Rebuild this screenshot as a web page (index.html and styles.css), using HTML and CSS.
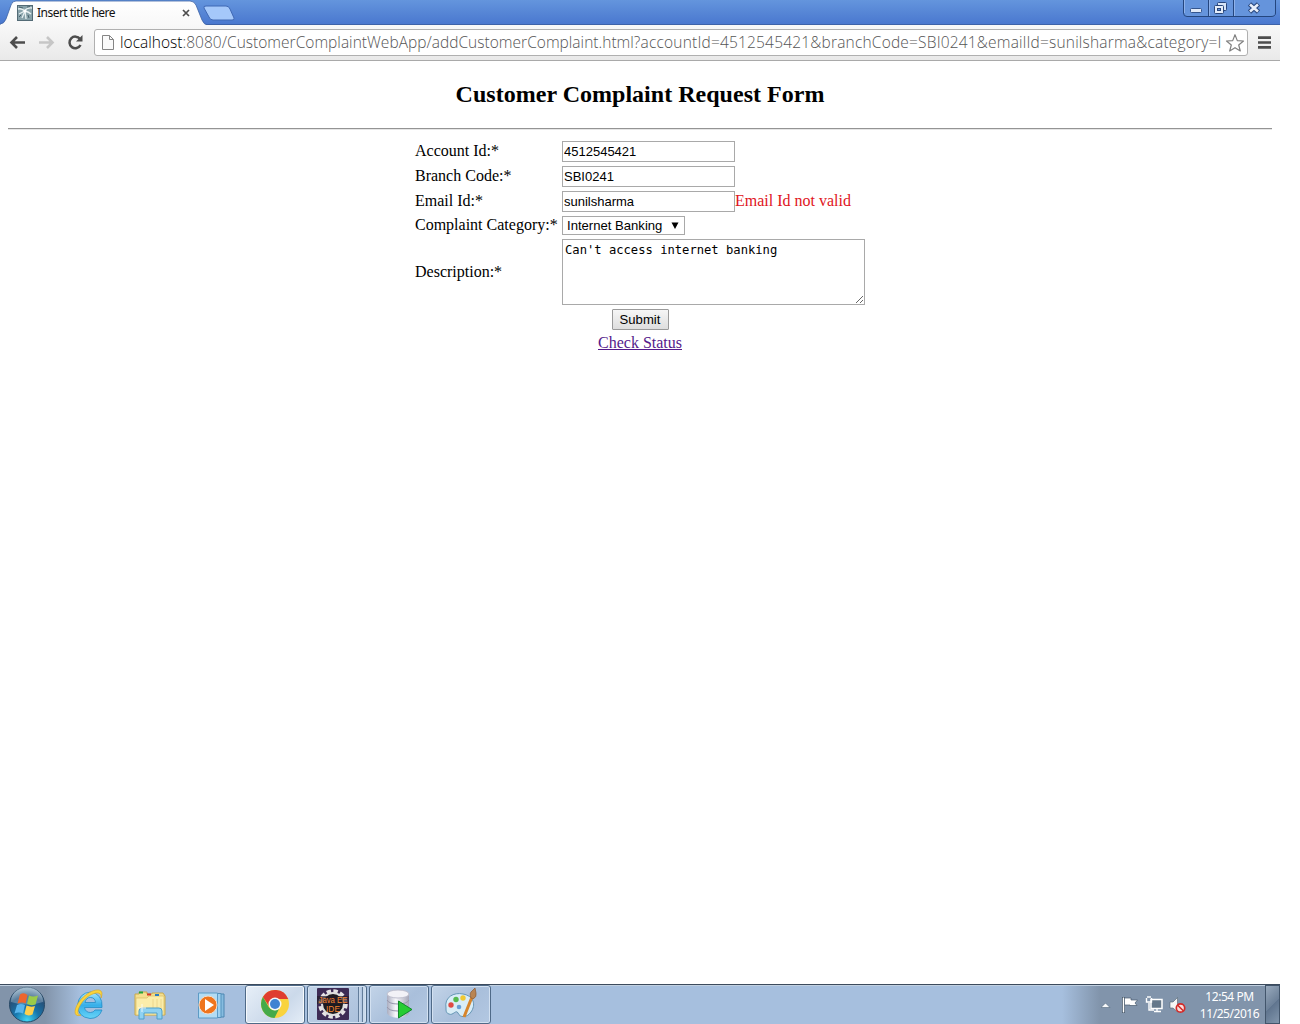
FILE: index.html
```html
<!DOCTYPE html>
<html lang="en">
<head>
<meta charset="utf-8">
<title>Insert title here</title>
<link rel="stylesheet" href="styles.css">
</head>
<body>
<div class="screen">
  <header class="tabstrip">
    <svg class="tabshape" width="240" height="26" viewBox="0 0 240 26">
      <defs><linearGradient id="tabg" x1="0" y1="0" x2="0" y2="1"><stop offset="0" stop-color="#fff"/><stop offset="1" stop-color="#f8f8f8"/></linearGradient></defs>
      <path d="M0 26V24Q4 24 6 19L11 5Q12 1 16 1H190Q194 1 196 5L202 20Q204 25 208 25V26Z" fill="url(#tabg)" stroke="#3c62a4" stroke-width=".8"/>
      <path d="M206 6H226Q229 6 230 9L234 18Q235 20 232 20H213Q210 20 209 17L204 8Q203 6 206 6Z" fill="#a5c8fa" stroke="#3f68b4"/>
    </svg>
    <div class="tab">
      <svg width="16" height="16" viewBox="0 0 16 16"><rect x=".5" y=".5" width="15" height="15" fill="#88a2aa" stroke="#536b76"/><path d="M1 4Q5 3 7.500 6Q10 2 15 3M7.500 6Q4 8 2 9M8 6Q12 7 14 9M8 6L5 13M8 6L9 14" stroke="#e7f0f1" stroke-width="1.300" fill="none"/><path d="M2 2L6 3M10 2L13 1.500M11 10L12 13M2 12L4 10" stroke="#47616b"/><circle cx="8" cy="6" r="1.500" fill="#fff"/></svg>
      <span class="tabtitle">Insert title here</span>
      <svg class="tabclose" width="8" height="8" viewBox="0 0 8 8"><path d="M1 1L7 7M7 1L1 7" stroke="#4d4d4d" stroke-width="1.7"/></svg>
    </div>
    <div class="winbtns">
      <svg width="93" height="18" viewBox="0 0 93 18">
        <path d="M.5 0V13Q.5 16.500 4 16.500H88Q92.500 16.500 92.500 13V0" fill="#6594dc" stroke="#24467f"/>
        <path d="M25.500 0V16M50.500 0V16" stroke="#24467f"/>
        <path d="M1.500 0V13M26.500 0V16M51.500 0V16" stroke="#8fb2ea"/>
        <rect x="7.500" y="8.500" width="11" height="4" rx="1" fill="#e0e9f8" stroke="#34558e"/>
        <rect x="34.500" y="2.500" width="9" height="8" rx="1" fill="#d7e4f7" stroke="#29477d"/>
        <rect x="31.500" y="5.500" width="9" height="8" rx="1" fill="#e4edfa" stroke="#29477d"/><rect x="34.500" y="8.500" width="3" height="2" fill="#6594dc" stroke="#29477d"/>
        <path d="M66.500 4L75.500 12M75.500 4L66.500 12" stroke="#29477d" stroke-width="4.800"/><path d="M67 4.500L75 11.500M75 4.500L67 11.500" stroke="#e8effb" stroke-width="2.600"/>
      </svg>
    </div>
  </header>

  <nav class="toolbar">
    <svg class="navicons" width="76" height="20" viewBox="0 0 76 20" fill="none">
      <path d="M17 9.500H4M9 4L3.500 9.500L9 15" stroke="#4d4d4d" stroke-width="2.600"/>
      <path d="M31 9.500H44M39 4L44.500 9.500L39 15" stroke="#c6c6c6" stroke-width="2.600"/>
      <path d="M72 6A5.800 5.800 0 1 0 72.500 12" stroke="#4d4d4d" stroke-width="2.500"/><path d="M74.500 2V8.500H68Z" fill="#4d4d4d"/>
    </svg>
    <div class="omnibox">
      <svg width="13" height="16" viewBox="0 0 13 16"><path d="M.5 .5H7.500L11.500 4.500V14.500H.5Z" fill="#fafafa" stroke="#858585"/><path d="M7.500 .5V4.500H11.500" fill="none" stroke="#858585"/></svg>
      <div class="url"><span class="host">localhost</span>:8080/CustomerComplaintWebApp/addCustomerComplaint.html<span class="query">?accountId=4512545421&amp;branchCode=SBI0241&amp;emailId=sunilsharma&amp;category=I</span></div>
      <svg class="star" width="20" height="20" viewBox="0 0 20 20"><path d="M10 1.700L12.300 7.600L18.500 8L13.700 12L15.300 18L10 14.700L4.700 18L6.300 12L1.500 8L7.700 7.600Z" fill="#fff" stroke="#808080" stroke-width="1.200" stroke-linejoin="round"/></svg>
    </div>
    <svg class="menu" width="13" height="13" viewBox="0 0 13 13"><path d="M0 1.700H13M0 6.500H13M0 11.300H13" stroke="#4d4d4d" stroke-width="2.700"/></svg>
  </nav>

  <main class="page">
    <h2 class="title">Customer Complaint Request Form</h2>
    <hr class="rule">
    <form class="form">
      <div class="row"><label class="label" for="acc">Account Id:*</label><input class="text" id="acc" value="4512545421"></div>
      <div class="row"><label class="label" for="branch">Branch Code:*</label><input class="text" id="branch" value="SBI0241"></div>
      <div class="row"><label class="label" for="email">Email Id:*</label><input class="text" id="email" value="sunilsharma"><span class="error">Email Id not valid</span></div>
      <div class="row row-select"><span class="label">Complaint Category:*</span><div class="select"><span>Internet Banking</span><svg width="8" height="8" viewBox="0 0 8 8"><path d="M.5 .5H7.500L4 7Z" fill="#000"/></svg></div></div>
      <div class="row row-area"><label class="label" for="desc">Description:*</label><textarea class="area" id="desc" spellcheck="false">Can't access internet banking</textarea></div>
      <button class="submit" type="button">Submit</button>
      <a class="link" href="#">Check Status</a>
    </form>
  </main>

  <footer class="taskbar">
    <svg class="start" width="40" height="40" viewBox="0 0 40 40">
      <defs><radialGradient id="orb" cx=".5" cy=".95" r=".9"><stop offset="0" stop-color="#40d8f5"/><stop offset=".4" stop-color="#1775ac"/><stop offset=".75" stop-color="#26527a"/><stop offset="1" stop-color="#8ba9bf"/></radialGradient></defs>
      <circle cx="20" cy="19.500" r="17.500" fill="url(#orb)" stroke="#284966"/>
      <path d="M4 17A16 16 0 0 1 36 17Q20 22 4 17Z" fill="#d6e6ef" opacity=".3"/>
      <path d="M13 9.500Q17 7 20.500 10L18.500 18.500Q15 16.500 10.500 18.500Z" fill="#ee652d"/>
      <path d="M22 10.500Q26 12.500 31 10.500L28.500 19.500Q24 21 20 19Z" fill="#9bcb49"/>
      <path d="M10 20Q14 18 18 20L16 28.500Q12 26.500 7.500 28.500Z" fill="#58b5ed"/>
      <path d="M19.500 20.500Q24 22.500 28 21L25.500 29.500Q21 31.500 17.500 29Z" fill="#fdd04d"/>
    </svg>
    <svg class="pin" width="36" height="36" viewBox="0 0 36 36">
      <defs><linearGradient id="ie" x1="0" y1="0" x2="0" y2="1"><stop offset="0" stop-color="#a9e9ff"/><stop offset=".5" stop-color="#36aee9"/><stop offset="1" stop-color="#68d5f7"/></linearGradient></defs>
      <path d="M31 20.500H13.500Q14.500 25.500 19.500 25.500Q22.500 25.500 24 23H31Q28 31.500 19 31.500Q6.500 30 6.500 18Q8 6 19.500 5Q32 7 31 20.500ZM14 15.500H24.500Q24 10.500 19.500 10.500Q15 10.500 14 15.500Z" fill="url(#ie)" stroke="#258bc5" stroke-width=".8" fill-rule="evenodd"/>
      <path d="M10 28C0 32 3 16 16 7C25 1 34 1 30 11C31 4 24 5 17 9.500C7 17 4 29 10 28Z" fill="#fad33c" stroke="#d9a61c" stroke-width=".6"/>
    </svg>
    <svg class="pin" width="36" height="36" viewBox="0 0 36 36">
      <path d="M3 7H7V5H15V7H20V6H31L33 9V28H3Z" fill="#f4df8e" stroke="#c9a94d"/>
      <path d="M4 11H15L17 9H32V28H4Z" fill="#fbedaa" stroke="#d8bc65" stroke-width=".7"/>
      <path d="M7 5.500H11" stroke="#20a33a" stroke-width="2"/><path d="M15 7.500H19" stroke="#d93528" stroke-width="2"/><path d="M23 8H27" stroke="#2c7cc2" stroke-width="2"/>
      <path d="M21 12V27M25 12V27M29 12V27" stroke="#ecd68c"/>
      <path d="M7 32V24Q7 21 10 21H27Q30 21 30 24V32H25V26H12V32Z" fill="#8fd2f1" stroke="#4e9fca"/><path d="M10 17V25M6 21H14" stroke="#fff" opacity=".8"/>
    </svg>
    <svg class="pin" width="36" height="36" viewBox="0 0 36 36">
      <path d="M12 7H31V30H12Z" fill="#86bce0" stroke="#4c86b1"/><path d="M9 6.500H28V30.500H9Z" fill="#9ed0ef" stroke="#5592bb"/><path d="M5.500 6H24.500V31H5.500Z" fill="#b3dcf3" stroke="#5c9bc5"/>
      <circle cx="15" cy="18" r="9" fill="#ef751d" stroke="#f6dcc6"/><path d="M12 12L21 18L12 24Z" fill="#fff"/>
    </svg>
    <div class="task active">
      <svg width="32" height="32" viewBox="0 0 32 32"><circle cx="16" cy="16" r="14" fill="#f9d33e"/><path d="M3.900 9A14 14 0 0 1 29.200 11H16L10 18Z" fill="#df3d30"/><path d="M3.900 9L10 19.500Q14 24 20 21L15.500 30A14 14 0 0 1 3.900 9Z" fill="#45aa4a"/><circle cx="16" cy="16" r="6.500" fill="#f5f7f8"/><circle cx="16" cy="16" r="5" fill="#3f83d2"/></svg>
    </div>
    <div class="task stack">
      <svg width="32" height="32" viewBox="0 0 32 32"><rect width="32" height="32" rx="1" fill="#3d2b55"/><circle cx="16" cy="16" r="12.500" fill="none" stroke="#e5e3e5" stroke-width="4.500" stroke-dasharray="4.200 2.345"/><circle cx="16" cy="16" r="11" fill="#1d1b20" stroke="#ddd" stroke-width="2"/><rect y="8" width="32" height="8" fill="#241b29" opacity=".7"/><text class="ide" x="16" y="15" textLength="29" lengthAdjust="spacingAndGlyphs">Java EE</text><text class="ide" x="16" y="23.500" textLength="14" lengthAdjust="spacingAndGlyphs">IDE</text></svg>
    </div>
    <div class="task">
      <svg width="32" height="32" viewBox="0 0 32 32"><defs><linearGradient id="db"><stop stop-color="#aaadc0"/><stop offset=".4" stop-color="#f8f8fc"/><stop offset="1" stop-color="#a5a7b8"/></linearGradient></defs><path d="M4 6V25Q5 29 15 30Q25 29 26 25V6Z" fill="url(#db)"/><ellipse cx="15" cy="6" rx="11" ry="4" fill="#f2f2f7" stroke="#bebfce"/><path d="M4 12Q6 16 15 16T26 12M4 19Q6 23 15 23T26 19" fill="none" stroke="#9697ac"/><path d="M15.500 13V30L29 21.500Z" fill="#27cc32" stroke="#10882a"/></svg>
    </div>
    <div class="task">
      <svg width="34" height="32" viewBox="0 0 34 32"><path d="M2 20C0 9 10 4 19 6C30 8 32 17 27 24C23 30 16 30 14 25C12 21 9 28 5 26C2 25 2 23 2 20Z" fill="#d9edf7" stroke="#6495b4"/><circle cx="7" cy="17" r="2.700" fill="#df4b45"/><circle cx="12" cy="11.500" r="2.700" fill="#55b94e"/><circle cx="19" cy="10" r="2.700" fill="#f0c832"/><circle cx="15" cy="19" r="2.300" fill="#699fd6"/><path d="M20 29L28 9" stroke="#d7852c" stroke-width="3"/><path d="M27 10Q25 5 28 3L31 0L32 5Q33 9 29 11Z" fill="#b98452" stroke="#8b5a33" stroke-width=".7"/></svg>
    </div>
    <div class="tray">
      <svg width="86" height="20" viewBox="0 0 86 20">
        <path d="M0 12.500L4.500 8L9 12.500Z" fill="#f7f9fb" stroke="#51667b" stroke-width=".6"/>
        <path d="M22.500 2V18" stroke="#35485b" stroke-width="3"/><path d="M22.500 2.500V17.500" stroke="#fff" stroke-width="1.600"/><path d="M23.500 3H30V5H36.500L34 8L36 10.500H29V10H23.500Z" fill="#fff" stroke="#475a6d" stroke-width=".7"/>
        <path d="M50 4.500H61V13.500H50Z" fill="#65788a" stroke="#fff" stroke-width="1.500"/><path d="M53 16.500H60M56 14V17M48 8V15H53M45.500 3V7H50.500V3M47 1V3M49 1V3" stroke="#fff" stroke-width="1.400" fill="none"/>
        <path d="M69 7H72L76.500 2.500V17L72 13H69Z" fill="#f6f6f6" stroke="#52616e" stroke-width=".6"/>
        <circle cx="79.500" cy="13" r="4.200" fill="#f9dfdd" stroke="#d22a28" stroke-width="1.700"/><path d="M76.500 10L82.500 16" stroke="#d22a28" stroke-width="1.600"/>
      </svg>
      <div class="clock"><span>12:54 PM</span><span>11/25/2016</span></div>
    </div>
    <div class="peek"></div>
  </footer>
</div>
</body>
</html>
```
FILE: styles.css
```css
* { box-sizing: border-box; }
body { margin: 0; background: #fff; overflow: hidden; }
svg { display: block; flex: none; }
.screen { width: 1280px; height: 1024px; display: flex; flex-direction: column; }

.tabstrip { position: relative; height: 25px; flex: none; display: flex; justify-content: space-between; background: linear-gradient(#6495dd, #4a78cf); border-bottom: 1px solid #3d62a8; }
.tabshape { position: absolute; left: 0; top: 0; }
.tab { position: relative; display: flex; align-items: center; width: 190px; height: 26px; padding-left: 17px; }
.tabtitle { flex: 1; margin-left: 4px; font: 12px/16px "Noto Sans", sans-serif; letter-spacing: -0.52px; color: #111; white-space: nowrap; }
.winbtns { margin-right: 4px; }

.toolbar { position: relative; height: 36px; flex: none; display: flex; align-items: center; padding: 0 9px 0 8px; background: linear-gradient(#f8f8f8, #e9e9e9); border-bottom: 1px solid #a9a9a9; }
.omnibox { width: 1154px; height: 27px; margin-left: 10px; padding: 0 2px 0 7px; display: flex; align-items: center; background: #fff; border: 1px solid #b0b0b0; border-radius: 3px; }
.url { width: 1105px; margin-left: 5px; white-space: nowrap; font: 300 15.5px/22px "Open Sans", sans-serif; letter-spacing: 0.02px; color: #555; position: relative; top: -1px; }
.query { letter-spacing: 0.19px; }
.host { color: #000; }
.menu { margin-left: 10px; }

.page { flex: 1; padding: 0 8px; font-family: "Liberation Serif", serif; font-size: 16px; color: #000; }
.title { margin: 20px 0 0; font-size: 24px; line-height: 27px; text-align: center; letter-spacing: 0.02px; }
.rule { margin: 20px 0 11px; height: 2px; border: 0; border-top: 1px solid #949494; border-bottom: 1px solid #e6e6e6; }
.form { width: 450px; margin: 0 auto; display: flex; flex-direction: column; align-items: center; }
.row { display: flex; align-items: center; width: 450px; height: 21px; margin-bottom: 4px; white-space: nowrap; }
.label, .error { line-height: 18px; padding-bottom: 1px; }
.label { width: 147px; flex: none; }
.text { width: 173px; height: 21px; margin: 0; padding: 1px; border: 1px solid #a9a9a9; font: 13px "Liberation Sans", sans-serif; color: #000; background: #fff; }
.error { color: #e0141c; }
.row-select { height: 19px; }
.select { display: flex; align-items: center; justify-content: space-between; width: 123px; height: 19px; padding: 0 5px 0 4px; border: 1px solid #a9a9a9; font: 13.1px/17px "Liberation Sans", sans-serif; }
.row-area { height: 66px; }
.area { width: 303px; height: 66px; margin: 0; padding: 2px; border: 1px solid #a9a9a9; font: 12.16px/16px "DejaVu Sans Mono", monospace; color: #000; resize: both; }
.submit { width: 57px; height: 21px; padding: 0; border: 1px solid #9a9a9a; border-radius: 1px; background: linear-gradient(#f6f6f6, #dedede); font: 13.1px "Liberation Sans", sans-serif; color: #000; }
.link { margin-top: 4px; line-height: 18px; color: #551a8b; }

.taskbar { height: 40px; flex: none; display: flex; align-items: center; background: linear-gradient(90deg, #8294aa 0, #8294aa 45px, #a6bfde 80px, #a6bfde 1062px, #8194ab 1100px, #8194ab); border-top: 1px solid #3c4b5d; box-shadow: inset 0 1px #c0cfdf; }
.start { margin-left: 7px; }
.pin { margin-left: 25px; }
.start + .pin { margin-left: 24px; }
.task { display: flex; align-items: center; justify-content: center; width: 60px; height: 39px; margin-right: 2px; border: 1px solid #4f6a88; border-radius: 3px; background: linear-gradient(135deg, #c3d4e8, #a9bfdb 55%, #b3c8e2); box-shadow: inset 0 0 0 1px #d3e1f1; }
.task svg { margin-top: -1px; }
.active { margin-left: 16px; background: linear-gradient(135deg, #e7eff8, #cbd9ea 60%, #e4edf7); box-shadow: inset 0 0 0 1px #f6f9fc; }
.stack { justify-content: flex-start; padding-left: 9px; background: linear-gradient(90deg, transparent 50px, #637d9b 50px, #637d9b 51px, #c9d9eb 51px, #adc3df 54px, #637d9b 54px, #637d9b 55px, #c9d9eb 55px), linear-gradient(135deg, #c3d4e8, #a9bfdb); }
.ide { font: 8.5px "Liberation Sans", sans-serif; fill: #f5852f; text-anchor: middle; }
.tray { margin-left: auto; display: flex; align-items: center; gap: 12px; }
.clock { display: flex; flex-direction: column; align-items: center; width: 61px; font: 12px/17px "Noto Sans", sans-serif; letter-spacing: -0.45px; color: #fff; white-space: nowrap; }
.peek { width: 15px; height: 39px; margin-left: 5px; border: 1px solid #42556b; background: linear-gradient(135deg, #99aabd, #6d8199 50%, #5f748e 51%, #8296ac); }
```
